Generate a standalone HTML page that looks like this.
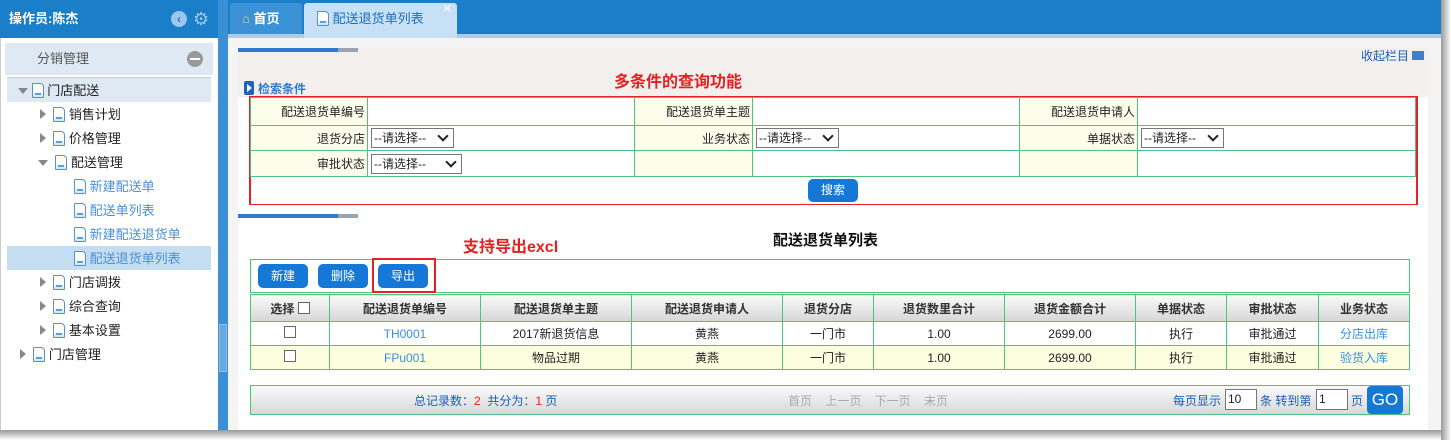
<!DOCTYPE html>
<html><head><meta charset="utf-8"><style>
*{margin:0;padding:0;box-sizing:border-box}
body{width:1451px;height:440px;background:#fff;font-family:"Liberation Sans","Noto Sans CJK SC",sans-serif;font-size:12px;color:#222;position:relative;overflow:hidden}
.a{position:absolute}
.shadow{left:0;top:430px;width:1451px;height:10px;background:linear-gradient(#999,#fff)}
.rsh{left:1441px;top:0;width:10px;height:440px;background:linear-gradient(90deg,#999,#fff)}
.doc{display:inline-block;width:12px;height:15px;border:1px solid #5b8fc8;border-radius:1px 4px 1px 1px;background:linear-gradient(#fff 60%,#cfe3f6);vertical-align:-3px;position:relative}
.doc:after{content:"";position:absolute;left:2px;right:2px;bottom:2px;height:2px;background:#5aa0e0}
.tri{display:inline-block;width:0;height:0;border-left:6px solid #888;border-top:5px solid transparent;border-bottom:5px solid transparent;vertical-align:0}
.trid{display:inline-block;width:0;height:0;border-top:6px solid #888;border-left:5px solid transparent;border-right:5px solid transparent;vertical-align:1px}
.tr{position:absolute;height:24px;line-height:26px;font-size:13px;white-space:nowrap}
table{border-collapse:collapse}
.q td{border:1px solid #4cc47c;font-size:12px}
.q .l{background:#fdfdec;text-align:right;padding-right:2px}
.sel{display:inline-block;border:1px solid #777;height:20px;line-height:18px;padding-left:2px;font-size:12px;background:#fff;margin-left:3px;position:relative;vertical-align:middle}
.sel:after{content:"";position:absolute;right:6px;top:3px;width:6px;height:6px;border-right:2px solid #222;border-bottom:2px solid #222;transform:rotate(45deg)}
.btn{position:absolute;background:#1578d6;color:#fff;border-radius:5px;text-align:center;font-size:12px;line-height:24px;height:24px;width:50px}
.g td,.g th{border:1px solid #4cc47c;text-align:center;font-size:12px}
.g th{background:linear-gradient(#fafafa,#d6d6d6);height:27px;font-weight:bold;color:#333}
.g td{height:24px}
.lk{color:#3a8ee0}
</style></head><body>
<div class="a shadow"></div><div class="a rsh"></div>
<div class="a" style="left:0;top:0;width:218px;height:430px;background:#fff;border-left:1px solid #ccc"></div>
<div class="a" style="left:0;top:0;width:218px;height:38px;background:#1a7ec8;color:#fff;font-weight:bold;font-size:13px;line-height:38px;padding-left:9px">操作员:陈杰</div>
<div class="a" style="left:171px;top:11px;width:16px;height:16px;border-radius:50%;background:#9cc7ea;color:#1a7ec8;font-size:12px;line-height:16px;text-align:center;font-weight:bold">&lsaquo;</div>
<div class="a" style="left:193px;top:10px;color:#9cc7ea;font-size:18px;line-height:18px">⚙</div>
<div class="a" style="left:5px;top:43px;width:208px;height:32px;background:#dfe9f3;color:#555;font-size:13px;line-height:32px;padding-left:32px">分销管理</div>
<div class="a" style="left:187px;top:51px;width:16px;height:16px;border-radius:50%;background:#999"><div class="a" style="left:3px;top:7px;width:10px;height:2px;background:#fff"></div></div>
<div class="a" style="left:7px;top:77px;width:204px;height:1px;background:#c8d0d8"></div>
<div class="a" style="left:7px;top:78px;width:204px;height:24px;background:#dfe9f3"></div>
<div class="a" style="left:7px;top:246px;width:204px;height:24px;background:#c4ddf1"></div>
<div class="tr" style="left:18px;top:78px"><span class="trid"></span> <span class="doc"></span> 门店配送</div>
<div class="tr" style="left:40px;top:102px"><span class="tri"></span> &nbsp;<span class="doc"></span> 销售计划</div>
<div class="tr" style="left:40px;top:126px"><span class="tri"></span> &nbsp;<span class="doc"></span> 价格管理</div>
<div class="tr" style="left:38px;top:150px"><span class="trid"></span> &nbsp;<span class="doc"></span> 配送管理</div>
<div class="tr" style="left:74px;top:174px;color:#4a90d8"><span class="doc"></span> 新建配送单</div>
<div class="tr" style="left:74px;top:198px;color:#4a90d8"><span class="doc"></span> 配送单列表</div>
<div class="tr" style="left:74px;top:222px;color:#4a90d8"><span class="doc"></span> 新建配送退货单</div>
<div class="tr" style="left:74px;top:246px;color:#4a90d8"><span class="doc"></span> 配送退货单列表</div>
<div class="tr" style="left:40px;top:270px"><span class="tri"></span> &nbsp;<span class="doc"></span> 门店调拨</div>
<div class="tr" style="left:40px;top:294px"><span class="tri"></span> &nbsp;<span class="doc"></span> 综合查询</div>
<div class="tr" style="left:40px;top:318px"><span class="tri"></span> &nbsp;<span class="doc"></span> 基本设置</div>
<div class="tr" style="left:20px;top:342px"><span class="tri"></span> &nbsp;<span class="doc"></span> 门店管理</div>
<div class="a" style="left:218px;top:0;width:10px;height:430px;background:#3a8fd5"></div>
<div class="a" style="left:219px;top:324px;width:8px;height:48px;background:#6aa9e0;border:1px solid #8dbde8"></div>
<div class="a" style="left:228px;top:0;width:1213px;height:430px;background:#f4f4f4"></div>
<div class="a" style="left:228px;top:0;width:1213px;height:34px;background:#1a7ec8"></div>
<div class="a" style="left:228px;top:34px;width:1213px;height:4px;background:#a9cdef"></div>
<div class="a" style="left:230px;top:3px;width:72px;height:31px;background:#3b92d6;border-radius:3px 3px 0 0;color:#fff;font-weight:bold;font-size:13px;line-height:31px;padding-left:12px"><span style="color:#e8c890">⌂</span> 首页</div>
<div class="a" style="left:304px;top:3px;width:153px;height:35px;background:#c8e0f5;border-radius:3px 3px 0 0;color:#1a6fbf;font-size:13px;line-height:31px;padding-left:13px"><span class="doc"></span> 配送退货单列表<span style="position:absolute;right:5px;top:-9px;color:#fff;font-size:11px">✕</span></div>
<div class="a" style="left:238px;top:48px;width:1190px;height:157px;background:#f2efed"></div>
<div class="a" style="left:238px;top:48px;width:100px;height:4px;background:#2e78cf"></div>
<div class="a" style="left:338px;top:48px;width:20px;height:4px;background:#9aa3b1"></div>
<div class="a" style="left:1361px;top:48px;color:#1a5fb4;font-size:12px;line-height:16px">收起栏目 <span style="display:inline-block;width:12px;height:9px;background:#3b7fcf;vertical-align:0"></span></div>
<div class="a" style="left:614px;top:68px;color:#e52020;font-weight:bold;font-size:16px">多条件的查询功能</div>
<div class="a" style="left:244px;top:81px;width:10px;height:14px;background:#1f63c0;border-radius:2px"><div class="a" style="left:3px;top:3px;border-left:5px solid #fff;border-top:4px solid transparent;border-bottom:4px solid transparent"></div></div>
<div class="a" style="left:258px;top:80px;color:#2f78cf;font-weight:bold;font-size:12px">检索条件</div>
<div class="a" style="left:238px;top:97px;width:1190px;height:108px;background:#fff"></div>
<div class="a" style="left:249px;top:96px;width:1169px;height:110px;border:2px solid #e8202a"></div>
<table class="a q" style="left:250px;top:97px;width:1166px">
<tr style="height:28px"><td class="l" style="width:117px">配送退货单编号</td><td style="width:267px"></td><td class="l" style="width:118px">配送退货单主题</td><td style="width:267px"></td><td class="l" style="width:118px">配送退货申请人</td><td></td></tr>
<tr style="height:25px"><td class="l">退货分店</td><td><span class="sel" style="width:83px">--请选择--</span></td><td class="l">业务状态</td><td><span class="sel" style="width:83px">--请选择--</span></td><td class="l">单据状态</td><td><span class="sel" style="width:83px">--请选择--</span></td></tr>
<tr style="height:26px"><td class="l">审批状态</td><td><span class="sel" style="width:91px">--请选择--</span></td><td class="l"></td><td></td><td class="l"></td><td></td></tr>
</table>
<div class="btn" style="left:808px;top:179px;width:50px;height:23px;line-height:23px">搜索</div>
<div class="a" style="left:238px;top:205px;width:1190px;height:225px;background:#fff"></div>
<div class="a" style="left:238px;top:214px;width:100px;height:4px;background:#2e78cf"></div>
<div class="a" style="left:338px;top:214px;width:20px;height:4px;background:#9aa3b1"></div>
<div class="a" style="left:773px;top:229px;font-weight:bold;font-size:15px;color:#111">配送退货单列表</div>
<div class="a" style="left:463px;top:233px;color:#e52020;font-weight:bold;font-size:16px">支持导出excl</div>
<div class="a" style="left:250px;top:259px;width:1160px;height:34px;border:1px solid #4cc47c"></div>
<div class="btn" style="left:258px;top:264px">新建</div>
<div class="btn" style="left:318px;top:264px">删除</div>
<div class="btn" style="left:378px;top:264px">导出</div>
<div class="a" style="left:372px;top:258px;width:64px;height:35px;border:2px solid #e8202a"></div>
<table class="a g" style="left:250px;top:294px;width:1160px">
<tr><th style="width:79px">选择 <span style="display:inline-block;width:12px;height:12px;border:1px solid #666;background:#fff;vertical-align:-1px"></span></th><th style="width:151px">配送退货单编号</th><th style="width:151px">配送退货单主题</th><th style="width:151px">配送退货申请人</th><th style="width:91px">退货分店</th><th style="width:131px">退货数里合计</th><th style="width:131px">退货金额合计</th><th style="width:91px">单据状态</th><th style="width:92px">审批状态</th><th>业务状态</th></tr>
<tr><td><span style="display:inline-block;width:12px;height:12px;border:1px solid #666"></span></td><td class="lk">TH0001</td><td>2017新退货信息</td><td>黄燕</td><td>一门市</td><td>1.00</td><td>2699.00</td><td>执行</td><td>审批通过</td><td class="lk">分店出库</td></tr>
<tr style="background:#fdfde0"><td><span style="display:inline-block;width:12px;height:12px;border:1px solid #666;background:#fff"></span></td><td class="lk">FPu001</td><td>物品过期</td><td>黄燕</td><td>一门市</td><td>1.00</td><td>2699.00</td><td>执行</td><td>审批通过</td><td class="lk">验货入库</td></tr>
</table>
<div class="a" style="left:250px;top:385px;width:1160px;height:30px;border:1px solid #4cc47c;background:linear-gradient(#fafafa,#d8d8d8)"></div>
<div class="a" style="left:414px;top:392px;color:#1a5fb4">总记录数：<span style="color:#e52020">2</span>&nbsp; 共分为：<span style="color:#e52020">1</span> 页</div>
<div class="a" style="left:788px;top:392px;color:#aaa;word-spacing:10px">首页 上一页 下一页 末页</div>
<div class="a" style="left:1173px;top:392px;color:#1a5fb4">每页显示</div>
<div class="a" style="left:1225px;top:389px;width:32px;height:21px;border:1px solid #777;background:#fff;padding-left:2px;line-height:19px">10</div>
<div class="a" style="left:1260px;top:392px;color:#1a5fb4">条 转到第</div>
<div class="a" style="left:1316px;top:389px;width:32px;height:21px;border:1px solid #777;background:#fff;padding-left:2px;line-height:19px">1</div>
<div class="a" style="left:1351px;top:392px;color:#1a5fb4">页</div>
<div class="a" style="left:1367px;top:386px;width:36px;height:28px;background:#1578d6;color:#fff;border-radius:4px;font-size:17px;line-height:28px;text-align:center">GO</div>
</body></html>
